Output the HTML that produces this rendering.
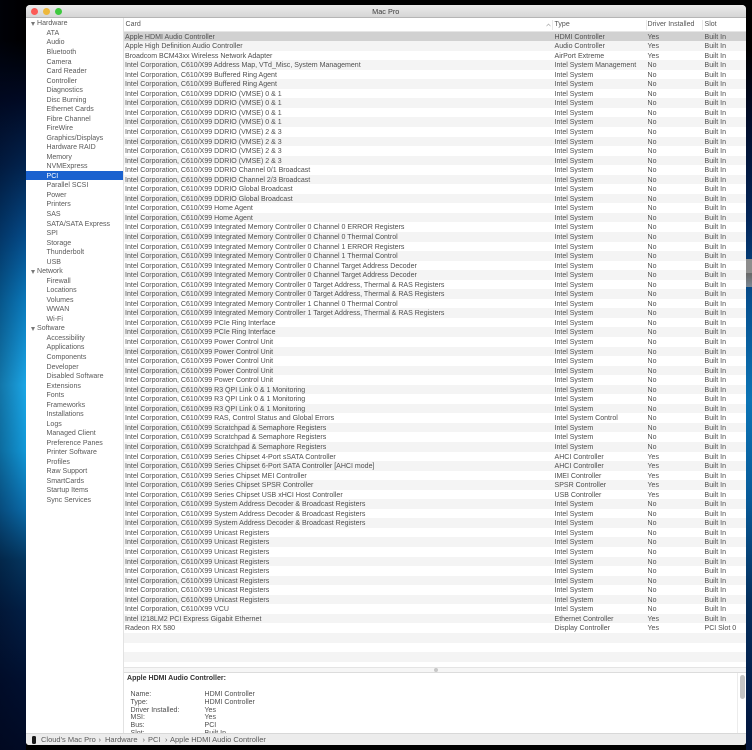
<!DOCTYPE html>
<html><head><meta charset="utf-8"><title>Mac Pro</title>
<style>
html,body{margin:0;padding:0;width:752px;height:750px;overflow:hidden;background:#000}
*{box-sizing:border-box}
#bg{position:absolute;left:0;top:0;width:752px;height:750px;background:#000}
#bl{position:absolute;left:0;top:0;width:26px;height:750px;background:linear-gradient(#000 0,#000 40px,#010a24 100px,#02234e 165px,#044a88 235px,#0a78ba 300px,#1ba6e6 385px,#1298d8 450px,#0a6aa8 510px,#04365f 560px,#021f45 610px,#011030 680px,#010a24 750px)}
#bl2{position:absolute;left:0;top:0;width:26px;height:750px;background:linear-gradient(90deg,rgba(0,5,25,.3),rgba(0,5,25,0))}
#br{position:absolute;left:746px;top:0;width:6px;height:750px;background:linear-gradient(#000 0,#000 50px,#020d2a 120px,#03265a 220px,#06508f 300px,#0b74b5 400px,#075a98 500px,#04305f 600px,#021c48 700px,#02143a 750px)}
#patch{position:absolute;left:746px;top:259px;width:6px;height:28px;background:linear-gradient(#8d8d8d 0,#8d8d8d 50%,#666 51%,#7b8894 100%)}
#win{position:absolute;left:25.5px;top:4.5px;width:720.5px;height:740.5px;background:#fff;border-radius:4px 4px 3px 3px;overflow:hidden;font-family:"Liberation Sans",sans-serif;font-size:7.04px;color:#4f4f4f;filter:blur(.38px)}
#title{position:absolute;left:0;top:0;width:100%;height:13px;background:linear-gradient(#ebebeb,#d5d5d5);border-bottom:1px solid #b5b5b5;text-align:center;font-size:7.3px;line-height:13px;color:#3c3c3c}
.tl{position:absolute;top:3px;width:7.5px;height:7.5px;border-radius:50%}
#side{position:absolute;left:0;top:13px;width:98px;height:715.5px;background:#fff;border-right:1px solid #e2e2e2;padding-top:.9px}
#side div{height:9.54px;line-height:11.2px;padding-left:21px;white-space:nowrap;color:#5a5a5a;overflow:visible}
#side div.h{padding-left:11.5px;position:relative}
#side div.h:before{content:"";position:absolute;left:5.5px;top:3.5px;border-left:2.4px solid transparent;border-right:2.4px solid transparent;border-top:4px solid #777}
#side div.s{background:#1b62cf;color:#fff}
#head{position:absolute;left:98px;top:13px;width:622.5px;height:14px;background:#fff;border-bottom:1px solid #e6e6e6;line-height:14px;color:#555}
#head span{position:absolute;top:0}
#head i{position:absolute;top:2px;height:10px;width:1px;background:#e8e8e8}
#rows{position:absolute;left:98px;top:27px;width:622.5px}
#rows div{position:relative;height:9.548px;line-height:9.548px;white-space:nowrap;background:#f4f4f4}
#rows div:nth-child(odd){background:#fff}
#rows div.sel{background:#d1d1d1}
#rows span{position:absolute;top:1px}
#rows span:nth-child(1){left:1.5px}
#rows span:nth-child(2){left:431px}
#rows span:nth-child(3){left:524px}
#rows span:nth-child(4){left:581px}
#rows div.e{background:#f4f4f4}
#rows div.w{background:#fff}
#div{position:absolute;left:98px;top:662px;width:622.5px;height:6px;background:#f6f6f6;border-top:1px solid #e4e4e4;border-bottom:1px solid #dcdcdc}
#div:after{content:"";position:absolute;left:310px;top:0;width:4px;height:4px;border-radius:50%;background:#c8c8c8}
#det{position:absolute;left:98px;top:668px;width:622.5px;height:60.5px;background:#fff;overflow:hidden;color:#4f4f4f}
#det span{position:absolute;white-space:nowrap}
#det .l{left:7px}
#det .v{left:81px}
#bar{position:absolute;left:714px;top:670.5px;width:5px;height:24px;border-radius:2.5px;background:#c4c4c4}
#trk{position:absolute;left:711.5px;top:668px;width:1px;height:60px;background:#ececec}
#st{position:absolute;left:0;top:728.5px;width:100%;height:12px;background:#ececec;border-top:1px solid #d8d8d8;color:#5a5a5a;font-size:7.5px;line-height:11px}
#st span{position:absolute;top:0;white-space:nowrap}
#st b{position:absolute;left:6px;top:2px;width:4.5px;height:8px;background:#1a1a1a;border-radius:1.5px}
</style></head><body>
<div id="bg"></div><div id="bl"></div><div id="bl2"></div><div id="br"></div><div id="patch"></div>
<div id="win">
<div id="title">Mac Pro
<span class="tl" style="left:5px;background:#fc5b57"></span>
<span class="tl" style="left:17px;background:#eeb83c"></span>
<span class="tl" style="left:29px;background:#3ec93f"></span></div>
<div id="side">
<div class="h">Hardware</div><div>ATA</div><div>Audio</div><div>Bluetooth</div><div>Camera</div><div>Card Reader</div><div>Controller</div><div>Diagnostics</div><div>Disc Burning</div><div>Ethernet Cards</div><div>Fibre Channel</div><div>FireWire</div><div>Graphics/Displays</div><div>Hardware RAID</div><div>Memory</div><div>NVMExpress</div><div class="s">PCI</div><div>Parallel SCSI</div><div>Power</div><div>Printers</div><div>SAS</div><div>SATA/SATA Express</div><div>SPI</div><div>Storage</div><div>Thunderbolt</div><div>USB</div>
<div class="h">Network</div><div>Firewall</div><div>Locations</div><div>Volumes</div><div>WWAN</div><div>Wi-Fi</div>
<div class="h">Software</div><div>Accessibility</div><div>Applications</div><div>Components</div><div>Developer</div><div>Disabled Software</div><div>Extensions</div><div>Fonts</div><div>Frameworks</div><div>Installations</div><div>Logs</div><div>Managed Client</div><div>Preference Panes</div><div>Printer Software</div><div>Profiles</div><div>Raw Support</div><div>SmartCards</div><div>Startup Items</div><div>Sync Services</div>
</div>
<div id="head"><span style="left:2px">Card</span><svg style="position:absolute;left:422px;top:5px" width="5" height="4" viewBox="0 0 5 4"><path d="M.5 3.2 2.5 1l2 2.2" fill="none" stroke="#aaa" stroke-width=".7"/></svg><i style="left:428px"></i><span style="left:431px">Type</span><i style="left:522px"></i><span style="left:524px">Driver Installed</span><i style="left:578px"></i><span style="left:581px">Slot</span></div>
<div id="rows">
<div class="sel"><span>Apple HDMI Audio Controller</span><span>HDMI Controller</span><span>Yes</span><span>Built In</span></div>
<div><span>Apple High Definition Audio Controller</span><span>Audio Controller</span><span>Yes</span><span>Built In</span></div>
<div><span>Broadcom BCM43xx Wireless Network Adapter</span><span>AirPort Extreme</span><span>Yes</span><span>Built In</span></div>
<div><span>Intel Corporation, C610/X99 Address Map, VTd_Misc, System Management</span><span>Intel System Management</span><span>No</span><span>Built In</span></div>
<div><span>Intel Corporation, C610/X99 Buffered Ring Agent</span><span>Intel System</span><span>No</span><span>Built In</span></div>
<div><span>Intel Corporation, C610/X99 Buffered Ring Agent</span><span>Intel System</span><span>No</span><span>Built In</span></div>
<div><span>Intel Corporation, C610/X99 DDRIO (VMSE) 0 &amp; 1</span><span>Intel System</span><span>No</span><span>Built In</span></div>
<div><span>Intel Corporation, C610/X99 DDRIO (VMSE) 0 &amp; 1</span><span>Intel System</span><span>No</span><span>Built In</span></div>
<div><span>Intel Corporation, C610/X99 DDRIO (VMSE) 0 &amp; 1</span><span>Intel System</span><span>No</span><span>Built In</span></div>
<div><span>Intel Corporation, C610/X99 DDRIO (VMSE) 0 &amp; 1</span><span>Intel System</span><span>No</span><span>Built In</span></div>
<div><span>Intel Corporation, C610/X99 DDRIO (VMSE) 2 &amp; 3</span><span>Intel System</span><span>No</span><span>Built In</span></div>
<div><span>Intel Corporation, C610/X99 DDRIO (VMSE) 2 &amp; 3</span><span>Intel System</span><span>No</span><span>Built In</span></div>
<div><span>Intel Corporation, C610/X99 DDRIO (VMSE) 2 &amp; 3</span><span>Intel System</span><span>No</span><span>Built In</span></div>
<div><span>Intel Corporation, C610/X99 DDRIO (VMSE) 2 &amp; 3</span><span>Intel System</span><span>No</span><span>Built In</span></div>
<div><span>Intel Corporation, C610/X99 DDRIO Channel 0/1 Broadcast</span><span>Intel System</span><span>No</span><span>Built In</span></div>
<div><span>Intel Corporation, C610/X99 DDRIO Channel 2/3 Broadcast</span><span>Intel System</span><span>No</span><span>Built In</span></div>
<div><span>Intel Corporation, C610/X99 DDRIO Global Broadcast</span><span>Intel System</span><span>No</span><span>Built In</span></div>
<div><span>Intel Corporation, C610/X99 DDRIO Global Broadcast</span><span>Intel System</span><span>No</span><span>Built In</span></div>
<div><span>Intel Corporation, C610/X99 Home Agent</span><span>Intel System</span><span>No</span><span>Built In</span></div>
<div><span>Intel Corporation, C610/X99 Home Agent</span><span>Intel System</span><span>No</span><span>Built In</span></div>
<div><span>Intel Corporation, C610/X99 Integrated Memory Controller 0 Channel 0 ERROR Registers</span><span>Intel System</span><span>No</span><span>Built In</span></div>
<div><span>Intel Corporation, C610/X99 Integrated Memory Controller 0 Channel 0 Thermal Control</span><span>Intel System</span><span>No</span><span>Built In</span></div>
<div><span>Intel Corporation, C610/X99 Integrated Memory Controller 0 Channel 1 ERROR Registers</span><span>Intel System</span><span>No</span><span>Built In</span></div>
<div><span>Intel Corporation, C610/X99 Integrated Memory Controller 0 Channel 1 Thermal Control</span><span>Intel System</span><span>No</span><span>Built In</span></div>
<div><span>Intel Corporation, C610/X99 Integrated Memory Controller 0 Channel Target Address Decoder</span><span>Intel System</span><span>No</span><span>Built In</span></div>
<div><span>Intel Corporation, C610/X99 Integrated Memory Controller 0 Channel Target Address Decoder</span><span>Intel System</span><span>No</span><span>Built In</span></div>
<div><span>Intel Corporation, C610/X99 Integrated Memory Controller 0 Target Address, Thermal &amp; RAS Registers</span><span>Intel System</span><span>No</span><span>Built In</span></div>
<div><span>Intel Corporation, C610/X99 Integrated Memory Controller 0 Target Address, Thermal &amp; RAS Registers</span><span>Intel System</span><span>No</span><span>Built In</span></div>
<div><span>Intel Corporation, C610/X99 Integrated Memory Controller 1 Channel 0 Thermal Control</span><span>Intel System</span><span>No</span><span>Built In</span></div>
<div><span>Intel Corporation, C610/X99 Integrated Memory Controller 1 Target Address, Thermal &amp; RAS Registers</span><span>Intel System</span><span>No</span><span>Built In</span></div>
<div><span>Intel Corporation, C610/X99 PCIe Ring Interface</span><span>Intel System</span><span>No</span><span>Built In</span></div>
<div><span>Intel Corporation, C610/X99 PCIe Ring Interface</span><span>Intel System</span><span>No</span><span>Built In</span></div>
<div><span>Intel Corporation, C610/X99 Power Control Unit</span><span>Intel System</span><span>No</span><span>Built In</span></div>
<div><span>Intel Corporation, C610/X99 Power Control Unit</span><span>Intel System</span><span>No</span><span>Built In</span></div>
<div><span>Intel Corporation, C610/X99 Power Control Unit</span><span>Intel System</span><span>No</span><span>Built In</span></div>
<div><span>Intel Corporation, C610/X99 Power Control Unit</span><span>Intel System</span><span>No</span><span>Built In</span></div>
<div><span>Intel Corporation, C610/X99 Power Control Unit</span><span>Intel System</span><span>No</span><span>Built In</span></div>
<div><span>Intel Corporation, C610/X99 R3 QPI Link 0 &amp; 1 Monitoring</span><span>Intel System</span><span>No</span><span>Built In</span></div>
<div><span>Intel Corporation, C610/X99 R3 QPI Link 0 &amp; 1 Monitoring</span><span>Intel System</span><span>No</span><span>Built In</span></div>
<div><span>Intel Corporation, C610/X99 R3 QPI Link 0 &amp; 1 Monitoring</span><span>Intel System</span><span>No</span><span>Built In</span></div>
<div><span>Intel Corporation, C610/X99 RAS, Control Status and Global Errors</span><span>Intel System Control</span><span>No</span><span>Built In</span></div>
<div><span>Intel Corporation, C610/X99 Scratchpad &amp; Semaphore Registers</span><span>Intel System</span><span>No</span><span>Built In</span></div>
<div><span>Intel Corporation, C610/X99 Scratchpad &amp; Semaphore Registers</span><span>Intel System</span><span>No</span><span>Built In</span></div>
<div><span>Intel Corporation, C610/X99 Scratchpad &amp; Semaphore Registers</span><span>Intel System</span><span>No</span><span>Built In</span></div>
<div><span>Intel Corporation, C610/X99 Series Chipset 4-Port sSATA Controller</span><span>AHCI Controller</span><span>Yes</span><span>Built In</span></div>
<div><span>Intel Corporation, C610/X99 Series Chipset 6-Port SATA Controller [AHCI mode]</span><span>AHCI Controller</span><span>Yes</span><span>Built In</span></div>
<div><span>Intel Corporation, C610/X99 Series Chipset MEI Controller</span><span>IMEI Controller</span><span>Yes</span><span>Built In</span></div>
<div><span>Intel Corporation, C610/X99 Series Chipset SPSR Controller</span><span>SPSR Controller</span><span>Yes</span><span>Built In</span></div>
<div><span>Intel Corporation, C610/X99 Series Chipset USB xHCI Host Controller</span><span>USB Controller</span><span>Yes</span><span>Built In</span></div>
<div><span>Intel Corporation, C610/X99 System Address Decoder &amp; Broadcast Registers</span><span>Intel System</span><span>No</span><span>Built In</span></div>
<div><span>Intel Corporation, C610/X99 System Address Decoder &amp; Broadcast Registers</span><span>Intel System</span><span>No</span><span>Built In</span></div>
<div><span>Intel Corporation, C610/X99 System Address Decoder &amp; Broadcast Registers</span><span>Intel System</span><span>No</span><span>Built In</span></div>
<div><span>Intel Corporation, C610/X99 Unicast Registers</span><span>Intel System</span><span>No</span><span>Built In</span></div>
<div><span>Intel Corporation, C610/X99 Unicast Registers</span><span>Intel System</span><span>No</span><span>Built In</span></div>
<div><span>Intel Corporation, C610/X99 Unicast Registers</span><span>Intel System</span><span>No</span><span>Built In</span></div>
<div><span>Intel Corporation, C610/X99 Unicast Registers</span><span>Intel System</span><span>No</span><span>Built In</span></div>
<div><span>Intel Corporation, C610/X99 Unicast Registers</span><span>Intel System</span><span>No</span><span>Built In</span></div>
<div><span>Intel Corporation, C610/X99 Unicast Registers</span><span>Intel System</span><span>No</span><span>Built In</span></div>
<div><span>Intel Corporation, C610/X99 Unicast Registers</span><span>Intel System</span><span>No</span><span>Built In</span></div>
<div><span>Intel Corporation, C610/X99 Unicast Registers</span><span>Intel System</span><span>No</span><span>Built In</span></div>
<div><span>Intel Corporation, C610/X99 VCU</span><span>Intel System</span><span>No</span><span>Built In</span></div>
<div><span>Intel I218LM2 PCI Express Gigabit Ethernet</span><span>Ethernet Controller</span><span>Yes</span><span>Built In</span></div>
<div><span>Radeon RX 580</span><span>Display Controller</span><span>Yes</span><span>PCI Slot 0</span></div>
<div class="e"></div><div class="w"></div><div class="e"></div><div class="w" style="height:5px"></div>
</div>
<div id="div"></div>
<div id="det">
<span style="left:3.5px;top:2.5px;font-weight:bold;color:#333">Apple HDMI Audio Controller:</span>
<span class="l" style="top:18.5px">Name:</span><span class="v" style="top:18.5px">HDMI Controller</span>
<span class="l" style="top:26.2px">Type:</span><span class="v" style="top:26.2px">HDMI Controller</span>
<span class="l" style="top:34px">Driver Installed:</span><span class="v" style="top:34px">Yes</span>
<span class="l" style="top:41.8px">MSI:</span><span class="v" style="top:41.8px">Yes</span>
<span class="l" style="top:49.5px">Bus:</span><span class="v" style="top:49.5px">PCI</span>
<span class="l" style="top:57.3px">Slot:</span><span class="v" style="top:57.3px">Built In</span>
</div>
<div id="trk"></div>
<div id="bar"></div>
<div id="st"><b></b><span style="left:15.5px">Cloud's Mac Pro</span><span style="left:73px">&#8250;</span><span style="left:79.5px">Hardware</span><span style="left:117px">&#8250;</span><span style="left:122.5px">PCI</span><span style="left:139.5px">&#8250;</span><span style="left:144.5px">Apple HDMI Audio Controller</span></div>
</div>
</body></html>
